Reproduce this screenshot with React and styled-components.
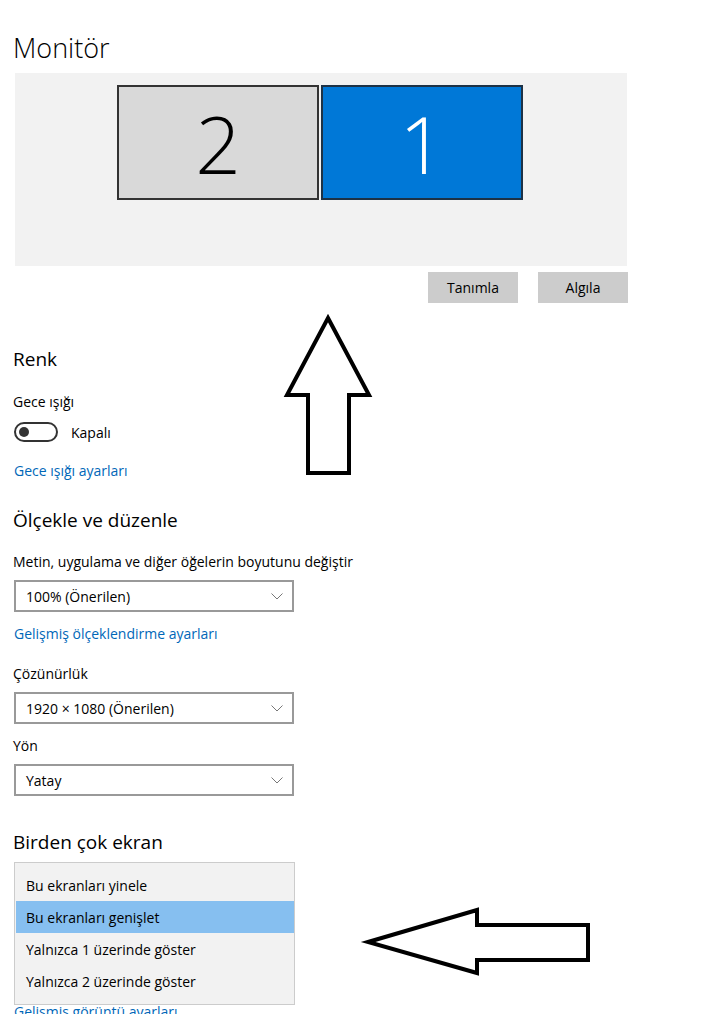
import React from "react";
import styled, { createGlobalStyle } from "styled-components";

const Global = createGlobalStyle`
  html, body { margin: 0; padding: 0; background: #fff; }
  body { font-family: "Open Sans", "Noto Sans", sans-serif; color: #000; }
  * { box-sizing: border-box; }
`;

const Page = styled.div`
  position: relative;
  width: 727px;
  height: 1014px;
  overflow: hidden;
  padding-left: 13px;
`;

const Title = styled.h1`
  margin: 28px 0 0 0;
  font-size: 27px;
  font-weight: 300;
  line-height: 40px;
`;

const Panel = styled.div`
  margin: 5px 0 0 2px;
  width: 612px;
  height: 193px;
  background: #f2f2f2;
  display: flex;
  align-items: flex-start;
  gap: 2px;
  padding: 12px 0 0 102px;
`;

const Screen = styled.div`
  width: 202px;
  height: 115px;
  border: 2px solid ${(p) => (p.$active ? "#1d3246" : "#333")};
  background: ${(p) => (p.$active ? "#0078d7" : "#d9d9d9")};
  color: ${(p) => (p.$active ? "#fff" : "#000")};
  display: flex;
  align-items: center;
  justify-content: center;
  font-size: 80px;
  font-weight: 300;
  line-height: 1;
`;

const ButtonRow = styled.div`
  margin-top: 6px;
  width: 615px;
  display: flex;
  justify-content: flex-end;
  gap: 20px;
`;

const Button = styled.button`
  width: 90px;
  height: 31px;
  border: none;
  background: #cccccc;
  font-family: inherit;
  font-size: 14px;
  color: #000;
  padding: 0;
`;

const Heading = styled.h2`
  margin: ${(p) => p.$mt}px 0 0 0;
  font-size: 19px;
  font-weight: 400;
  line-height: 28px;
`;

const Label = styled.div`
  margin-top: ${(p) => p.$mt}px;
  font-size: 14px;
  line-height: 20px;
`;

const Link = styled.div`
  margin-top: ${(p) => p.$mt}px;
  font-size: 14px;
  line-height: 20px;
  color: #0067b8;
  padding-left: 1px;
`;

const ToggleRow = styled.div`
  margin-top: 10px;
  display: flex;
  align-items: center;
  gap: 13px;
  height: 20px;
  padding-left: 1px;
  font-size: 14px;
`;

const Toggle = styled.div`
  width: 44px;
  height: 20px;
  border: 2px solid #333;
  border-radius: 10px;
  display: flex;
  align-items: center;
  padding-left: 3px;
  &::before {
    content: "";
    width: 10px;
    height: 10px;
    border-radius: 50%;
    background: #333;
  }
`;

const Select = styled.div`
  margin-top: ${(p) => p.$mt}px;
  margin-left: 1px;
  width: 280px;
  height: 32px;
  border: 2px solid #999;
  display: flex;
  align-items: center;
  justify-content: space-between;
  padding: 0 9px 0 10px;
  font-size: 14px;
`;

const Popup = styled.div`
  position: relative;
  z-index: 1;
  margin-top: 6px;
  margin-left: 1px;
  width: 281px;
  height: 143px;
  border: 1px solid #cccccc;
  background: #f2f2f2;
  padding: 6px 0 0 1px;
`;

const Option = styled.div`
  height: 32px;
  display: flex;
  align-items: center;
  padding-left: 10px;
  width: 278px;
  font-size: 14px;
  background: ${(p) => (p.$selected ? "#86bff0" : "transparent")};
`;

const BottomLink = styled(Link)`
  margin-top: -3px;
`;

const ArrowSvg = styled.svg`
  position: absolute;
  left: 0;
  top: 0;
  pointer-events: none;
`;

const Chevron = () => (
  <svg width="12" height="7" viewBox="0 0 12 7">
    <path d="M0.5 0.5 L6 6 L11.5 0.5" fill="none" stroke="#777" strokeWidth="1" />
  </svg>
);

export default function App() {
  return (
    <>
      <Global />
      <Page>
        <Title>Monitör</Title>
        <Panel>
          <Screen>2</Screen>
          <Screen $active>1</Screen>
        </Panel>
        <ButtonRow>
          <Button>Tanımla</Button>
          <Button>Algıla</Button>
        </ButtonRow>

        <Heading $mt={42}>Renk</Heading>
        <Label $mt={19}>Gece ışığı</Label>
        <ToggleRow>
          <Toggle />
          <span>Kapalı</span>
        </ToggleRow>
        <Link $mt={19}>Gece ışığı ayarları</Link>

        <Heading $mt={25}>Ölçekle ve düzenle</Heading>
        <Label $mt={18}>Metin, uygulama ve diğer öğelerin boyutunu değiştir</Label>
        <Select $mt={8}>
          <span>100% (Önerilen)</span>
          <Chevron />
        </Select>
        <Link $mt={12}>Gelişmiş ölçeklendirme ayarları</Link>
        <Label $mt={20}>Çözünürlük</Label>
        <Select $mt={8}>
          <span>1920 × 1080 (Önerilen)</span>
          <Chevron />
        </Select>
        <Label $mt={12}>Yön</Label>
        <Select $mt={8}>
          <span>Yatay</span>
          <Chevron />
        </Select>

        <Heading $mt={32}>Birden çok ekran</Heading>
        <Popup>
          <Option>Bu ekranları yinele</Option>
          <Option $selected>Bu ekranları genişlet</Option>
          <Option>Yalnızca 1 üzerinde göster</Option>
          <Option>Yalnızca 2 üzerinde göster</Option>
        </Popup>
        <BottomLink>Gelişmiş görüntü ayarları</BottomLink>

        <ArrowSvg width="727" height="1014" viewBox="0 0 727 1014">
          <polygon
            points="328,318 369,395 349,395 349,473 308,473 308,395 287,395"
            fill="#fff"
            stroke="#000"
            strokeWidth="4"
            strokeLinejoin="miter"
          />
          <polygon
            points="368,942 477,910 477,925 588,925 588,960 477,960 477,973"
            fill="#fff"
            stroke="#000"
            strokeWidth="4"
            strokeLinejoin="miter"
          />
        </ArrowSvg>
      </Page>
    </>
  );
}
